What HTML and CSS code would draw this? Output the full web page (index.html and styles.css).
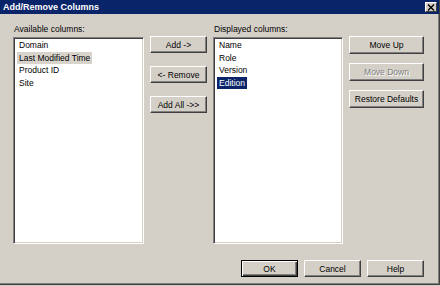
FILE: index.html
```html
<!DOCTYPE html>
<html lang="en">
<head>
    <meta charset="UTF-8">
    <meta name="viewport" content="width=device-width, initial-scale=1.0">
    <link rel="stylesheet" href="styles.css">
    <title>Add/Remove Columns</title>
</head>
<body>

    <div class="dialog">
        <div class="title-bar">
            <span class="title-text">Add/Remove Columns</span>
            <button class="close-button">
                <svg viewBox="0 0 8 7" width="8" height="7">
                    <path stroke="#000" stroke-width="1.4" d="M1 0.5 L7 6.5 M7 0.5 L1 6.5"/>
                </svg>
            </button>
        </div>

        <div class="content">
            <div class="list-column list-column-left">
                <div class="list-label">Available columns:</div>
                <div class="listbox">
                    <div class="list-item"><span>Domain</span></div>
                    <div class="list-item"><span class="item-hover">Last Modified Time</span></div>
                    <div class="list-item"><span>Product ID</span></div>
                    <div class="list-item"><span>Site</span></div>
                </div>
            </div>

            <div class="button-column move-buttons">
                <button class="win-button">Add -&gt;</button>
                <button class="win-button">&lt;- Remove</button>
                <button class="win-button">Add All -&gt;&gt;</button>
            </div>

            <div class="list-column list-column-right">
                <div class="list-label">Displayed columns:</div>
                <div class="listbox">
                    <div class="list-item"><span>Name</span></div>
                    <div class="list-item"><span>Role</span></div>
                    <div class="list-item"><span>Version</span></div>
                    <div class="list-item"><span class="item-selected">Edition</span></div>
                </div>
            </div>

            <div class="button-column order-buttons">
                <button class="win-button">Move Up</button>
                <button class="win-button" disabled>Move Down</button>
                <button class="win-button">Restore Defaults</button>
            </div>
        </div>

        <div class="footer">
            <button class="win-button default-button">OK</button>
            <button class="win-button">Cancel</button>
            <button class="win-button">Help</button>
        </div>
    </div>

</body>
</html>
```

FILE: styles.css
```css
* {
    margin: 0;
    padding: 0;
    box-sizing: border-box;
}

body {
    width: 440px;
    height: 286px;
    background-color: #d4d0c8;
    font-family: "Liberation Sans", Arial, sans-serif;
    font-size: 8.5px;
    color: #000;
    overflow: hidden;
}

.dialog {
    width: 440px;
    height: 285px;
    display: flex;
    flex-direction: column;
    background-color: #d4d0c8;
    border-right: 1px solid #404040;
    border-bottom: 1px solid #404040;
    box-shadow: inset -1px -1px #808080;
}

.title-bar {
    height: 14px;
    display: flex;
    align-items: center;
    justify-content: space-between;
    padding-left: 3px;
    padding-right: 2px;
    background-color: #0a246a;
    color: white;
}
.title-text {
    font-size: 9px;
    font-weight: bold;
}
.close-button {
    width: 12px;
    height: 10px;
    display: flex;
    align-items: center;
    justify-content: center;
    background-color: #d4d0c8;
    border: 1px solid;
    border-color: #fff #404040 #404040 #fff;
}

.content {
    display: flex;
    align-items: flex-start;
    padding: 9px 0 0 13px;
}

.list-column-left {
    width: 131px;
}
.list-column-right {
    width: 130px;
    margin-left: 6px;
}
.list-label {
    height: 14px;
    line-height: 12px;
    padding-left: 1px;
}
.listbox {
    height: 207px;
    padding: 1px 3px;
    background-color: white;
    border: 1px solid;
    border-color: #808080 #fff #fff #808080;
    box-shadow: inset 1px 1px #404040, inset -1px -1px #d4d0c8;
}
.list-item {
    height: 12.5px;
    line-height: 12px;
}
.list-item span {
    display: inline-block;
    padding: 0 2px;
    height: 12px;
}
.item-hover {
    background-color: #d8d4cc;
}
.item-selected {
    background-color: #0a246a;
    color: white;
}

.button-column {
    display: flex;
    flex-direction: column;
    margin-top: 13px;
    margin-left: 6px;
}
.move-buttons {
    width: 57px;
    gap: 13px;
}
.order-buttons {
    width: 75px;
    gap: 9px;
}
.order-buttons .win-button {
    height: 18px;
}

.win-button {
    height: 17px;
    font-family: "Liberation Sans", Arial, sans-serif;
    font-size: 8.5px;
    color: #000;
    background-color: #d4d0c8;
    border: 1px solid;
    border-color: #fff #404040 #404040 #fff;
    box-shadow: inset -1px -1px #808080;
}
.win-button:disabled {
    color: #808080;
    text-shadow: 1px 1px #fff;
}
.default-button {
    border-color: #000;
    box-shadow: inset 1px 1px #fff, inset -1px -1px #404040, inset -2px -2px #808080;
}

.footer {
    display: flex;
    justify-content: flex-end;
    gap: 6px;
    margin-top: auto;
    padding: 0 15px 7px 0;
}
.footer .win-button {
    width: 57px;
}
```
